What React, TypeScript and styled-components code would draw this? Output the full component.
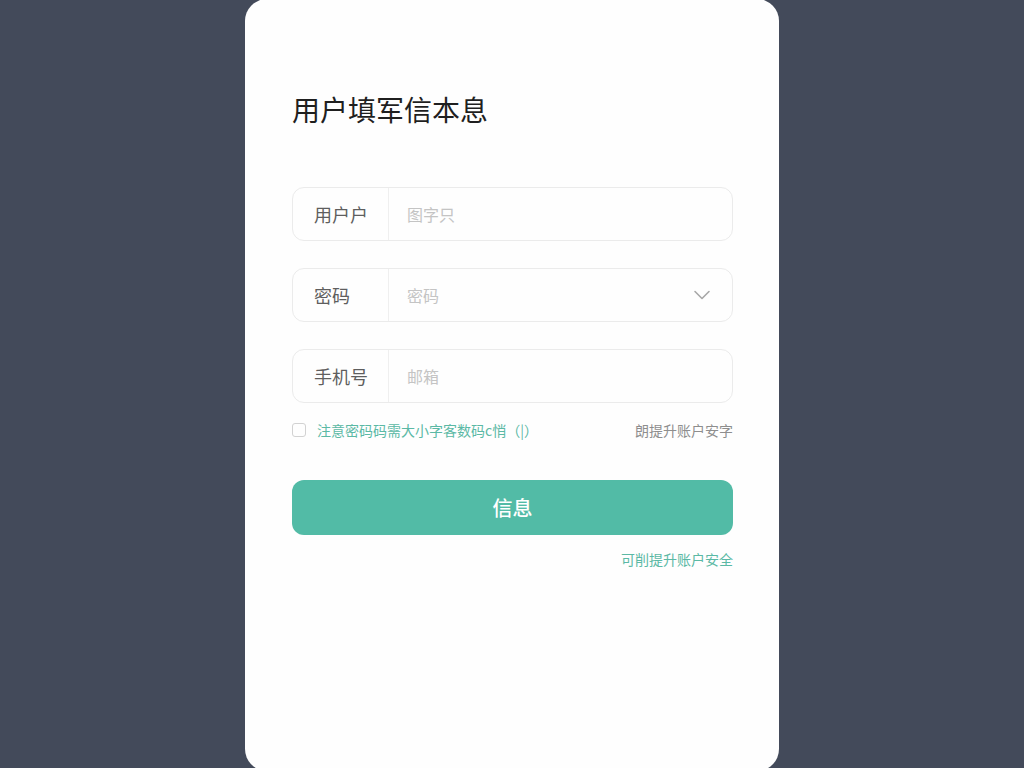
import React from 'react';
import styled, { createGlobalStyle } from 'styled-components';

const GlobalStyle = createGlobalStyle`
    html, body {
        margin: 0;
        padding: 0;
        height: 768px;
        overflow: hidden;
        background: #434a5a;
        font-family: "Noto Sans CJK SC", "Noto Sans", sans-serif;
    }
`;

const Page = styled.div`
    display: flex;
    justify-content: center;
    height: 768px;
`;

const Card = styled.div`
    width: 534px;
    height: 772px;
    margin-top: -1px;
    background: #fefefe;
    border-radius: 22px;
    box-sizing: border-box;
    padding: 92px 46px 0 47px;
    display: flex;
    flex-direction: column;
`;

const Title = styled.h1`
    margin: 0 0 60px;
    font-size: 28px;
    font-weight: 400;
    color: #1f1f1f;
    line-height: 36px;
`;

const Field = styled.div`
    display: flex;
    align-items: center;
    height: 54px;
    border: 1px solid #ebebeb;
    border-radius: 12px;
    box-sizing: border-box;
    margin-bottom: 27px;
    background: #fefefe;
`;

const Label = styled.div`
    width: 96px;
    height: 100%;
    display: flex;
    align-items: center;
    padding-left: 21px;
    box-sizing: border-box;
    border-right: 1px solid #efefef;
    font-size: 18px;
    color: #5e5e5e;
`;

const Placeholder = styled.div`
    flex: 1;
    padding-left: 18px;
    font-size: 16px;
    color: #c4c4c4;
`;

const Chevron = styled.svg`
    margin-right: 20px;
`;

const OptionRow = styled.div`
    display: flex;
    align-items: center;
    margin-top: -16px;
    height: 32px;
`;

const Box = styled.span`
    width: 14px;
    height: 14px;
    border: 1px solid #d2d2d2;
    border-radius: 3px;
    box-sizing: border-box;
    margin-right: 11px;
`;

const Hint = styled.span<{ $muted?: boolean }>`
    font-size: 14px;
    color: ${p => (p.$muted ? '#8e8e8e' : '#5bb9a5')};
`;

const Spacer = styled.span`
    flex: 1;
`;

const Submit = styled.button`
    margin-top: 34px;
    height: 55px;
    border: none;
    border-radius: 12px;
    background: #52bba6;
    color: #fff;
    font-family: inherit;
    font-size: 20px;
    font-weight: 500;
`;

const Footer = styled.div`
    margin-top: 14px;
    text-align: right;
    font-size: 14px;
    color: #5bb9a5;
`;

type FieldProps = { label: string; placeholder: string; select?: boolean };

const FormField = ({ label, placeholder, select }: FieldProps) => (
    <Field>
        <Label>{label}</Label>
        <Placeholder>{placeholder}</Placeholder>
        {select && (
            <Chevron width="20" height="20" viewBox="0 0 20 20" fill="none">
                <path d="M3 6.5l7 7 7-7" stroke="#a8a8a8" strokeWidth="1.6" strokeLinecap="round" strokeLinejoin="round" />
            </Chevron>
        )}
    </Field>
);

export default function App() {
    return (
        <Page>
            <GlobalStyle />
            <Card>
                <Title>用户填军信本息</Title>
                <FormField label="用户户" placeholder="图字只" />
                <FormField label="密码" placeholder="密码" select />
                <FormField label="手机号" placeholder="邮箱" />
                <OptionRow>
                    <Box />
                    <Hint>注意密码码需大小字客数码c悄（|）</Hint>
                    <Spacer />
                    <Hint $muted>朗提升账户安字</Hint>
                </OptionRow>
                <Submit>信息</Submit>
                <Footer>可削提升账户安全</Footer>
            </Card>
        </Page>
    );
}
